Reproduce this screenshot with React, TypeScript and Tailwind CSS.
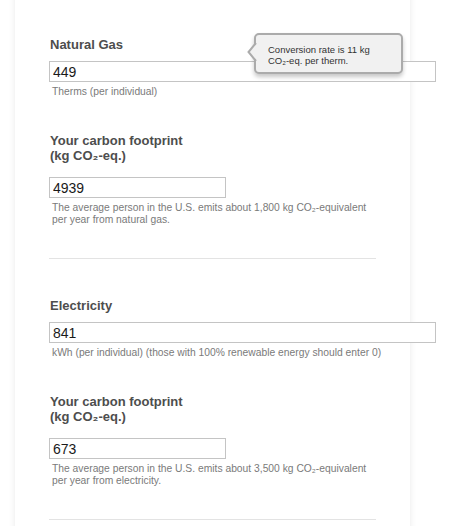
import React from "react";

const Hint: React.FC<{ children: React.ReactNode }> = ({ children }) => (
  <p className="mt-[4px] pl-[3px] text-[10.3px] leading-[12px] text-[#7a7a7a]">{children}</p>
);

const Heading: React.FC<{ children: React.ReactNode; className?: string }> = ({ children, className }) => (
  <h3 className={"pl-px text-[13px] font-bold leading-[15px] text-[#4d4d4d] " + (className ?? "")}>{children}</h3>
);

const Field: React.FC<{ value: string; wide?: boolean; className?: string }> = ({ value, wide, className }) => (
  <input
    readOnly
    value={value}
    className={
      (wide ? "w-[387px] " : "w-[177px] ") +
      "block h-[21px] border border-[#c4c4c4] bg-white px-[3px] text-[14px] leading-[19px] text-[#1a1a1a] outline-none " +
      (className ?? "")
    }
  />
);

const Section: React.FC<{
  title: string;
  value: string;
  unit: string;
  footprint: string;
  note: React.ReactNode;
}> = ({ title, value, unit, footprint, note }) => (
  <div>
    <Heading>{title}</Heading>
    <Field wide value={value} className="mt-[9px]" />
    <Hint>{unit}</Hint>
    <Heading className="mt-[35px]">
      Your carbon footprint
      <br />
      (kg CO₂-eq.)
    </Heading>
    <Field value={footprint} className="mt-[14px]" />
    <Hint>{note}</Hint>
    <div className="mt-[32px] h-px w-[327px] bg-[#e3e3e3]" />
  </div>
);

export default function App() {
  return (
    <div className="relative h-[526px] w-[461px] overflow-hidden bg-white font-['Liberation_Sans',Arial,sans-serif]">
      <div className="ml-[15px] -mt-[20px] h-[580px] w-[395px] bg-white pl-[34px] pt-[57px] shadow-[0_0_7px_rgba(0,0,0,0.09)]">
        <Section
          title="Natural Gas"
          value="449"
          unit="Therms (per individual)"
          footprint="4939"
          note={
            <>
              The average person in the U.S. emits about 1,800 kg CO₂-equivalent
              <br />
              per year from natural gas.
            </>
          }
        />
        <div className="mt-[39px]">
          <Section
            title="Electricity"
            value="841"
            unit="kWh (per individual) (those with 100% renewable energy should enter 0)"
            footprint="673"
            note={
              <>
                The average person in the U.S. emits about 3,500 kg CO₂-equivalent
                <br />
                per year from electricity.
              </>
            }
          />
        </div>
      </div>

      <div className="absolute left-[254px] top-[33px] h-[41px] w-[149px] rounded-[5px] border-2 border-[#ababab] bg-[#f1f1f1] pl-[12px] pt-[10px] text-[9.5px] leading-[10.5px] text-[#333] shadow-[0_3px_4px_rgba(0,0,0,0.22)]">
        <svg className="absolute left-[-9px] top-[7px]" width="11" height="20" viewBox="0 0 11 20">
          <polygon points="11,0 1,10 11,20" fill="#f1f1f1" />
          <polyline points="9,1 1.5,10 9,19" fill="none" stroke="#ababab" strokeWidth="2" />
        </svg>
        <p>Conversion rate is 11 kg</p>
        <p>CO₂-eq. per therm.</p>
      </div>
    </div>
  );
}
